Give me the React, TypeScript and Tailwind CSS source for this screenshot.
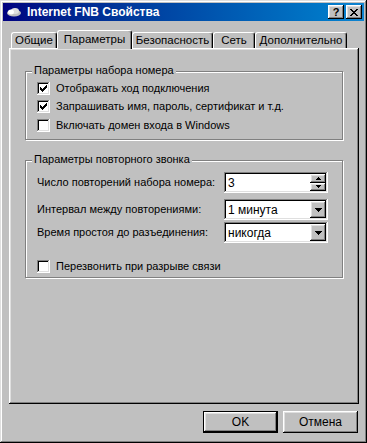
import React from "react";

const raised =
  "bg-[#c0c0c0] shadow-[inset_-1px_-1px_#000,inset_1px_1px_#fff,inset_-2px_-2px_#808080,inset_2px_2px_#dfdfdf]";
const sunken =
  "bg-white shadow-[inset_-1px_-1px_#fff,inset_1px_1px_#808080,inset_-2px_-2px_#dfdfdf,inset_2px_2px_#000]";

function Checkbox({ checked, label }: { checked?: boolean; label: string }) {
  return (
    <div className="flex items-center h-[13px]">
      <div className={`w-[13px] h-[13px] flex items-center justify-center ${sunken}`}>
        {checked && (
          <svg width="7" height="7" viewBox="0 0 7 7">
            <path d="M0 2h1v1h1v1h1V3h1V2h1V1h1V0h1v3H6v1H5v1H4v1H3v1H2V6H1V5H0z" fill="#000" />
          </svg>
        )}
      </div>
      <span className="ml-[6px] leading-none whitespace-nowrap">{label}</span>
    </div>
  );
}

function DownArrow() {
  return (
    <svg width="7" height="4" viewBox="0 0 7 4">
      <path d="M0 0h7v1H6v1H5v1H4v1H3V3H2V2H1V1H0z" fill="#000" />
    </svg>
  );
}

function Combo({ value }: { value: string }) {
  return (
    <div className={`h-[21px] w-[104px] flex items-center p-[2px] ${sunken}`}>
      <span className="flex-1 pl-[2px] leading-none text-[12px]">{value}</span>
      <div className={`w-[16px] h-[17px] flex items-center justify-center ${raised}`}>
        <DownArrow />
      </div>
    </div>
  );
}

function Spinner({ value }: { value: string }) {
  return (
    <div className={`h-[21px] w-[104px] flex items-center p-[2px] ${sunken}`}>
      <span className="flex-1 pl-[2px] leading-none text-[12px]">{value}</span>
      <div className="flex flex-col w-[16px] h-[17px]">
        <div className={`flex-1 flex items-center justify-center ${raised}`}>
          <svg width="5" height="3" viewBox="0 0 5 3">
            <path d="M2 0h1v1h1v1h1v1H0V2h1V1h1z" fill="#000" />
          </svg>
        </div>
        <div className={`flex-1 flex items-center justify-center ${raised}`}>
          <svg width="5" height="3" viewBox="0 0 5 3">
            <path d="M0 0h5v1H4v1H3v1H2V2H1V1H0z" fill="#000" />
          </svg>
        </div>
      </div>
    </div>
  );
}

function GroupBox({
  title,
  className,
  children,
}: {
  title: string;
  className: string;
  children: React.ReactNode;
}) {
  return (
    <div
      className={`relative w-[318px] border border-[#808080] shadow-[1px_1px_0_#fff,inset_1px_1px_0_#fff] ${className}`}
    >
      <span className="absolute -top-[7px] left-[6px] px-[2px] bg-[#c0c0c0] leading-none whitespace-nowrap">
        {title}
      </span>
      {children}
    </div>
  );
}

const tabs = [
  { label: "Общие", w: "w-[46px]" },
  { label: "Параметры", w: "w-[75px]", active: true },
  { label: "Безопасность", w: "w-[81px]" },
  { label: "Сеть", w: "w-[42px]" },
  { label: "Дополнительно", w: "w-[92px]" },
];

export default function App() {
  return (
    <div className="w-[367px] h-[443px] p-[3px] flex flex-col bg-[#c0c0c0] text-[11px] text-black font-['Liberation_Sans',Arial,sans-serif] shadow-[inset_-1px_-1px_#000,inset_1px_1px_#dfdfdf,inset_-2px_-2px_#808080,inset_2px_2px_#fff]">
      {/* Title bar */}
      <div className="h-[18px] flex items-center bg-gradient-to-r from-[#000080] to-[#1084d0] pl-[3px] pr-[2px]">
        <svg width="16" height="12" viewBox="0 0 16 12">
          <ellipse cx="8" cy="7" rx="7" ry="3.5" fill="#c0c0c0" />
          <ellipse cx="9" cy="5" rx="4" ry="3" fill="#dfdfdf" />
          <ellipse cx="5" cy="6" rx="3" ry="2.5" fill="#fff" />
        </svg>
        <span className="ml-[5px] flex-1 text-white font-bold text-[12px] leading-none">
          Internet FNB Свойства
        </span>
        <div className={`w-[16px] h-[14px] flex items-center justify-center font-bold text-[11px] leading-none ${raised}`}>
          ?
        </div>
        <div className={`ml-[2px] w-[16px] h-[14px] flex items-center justify-center ${raised}`}>
          <svg width="8" height="7" viewBox="0 0 8 7">
            <path d="M0 0h2v1h1v1h2V1h1V0h2v1H7v1H6v1H5v1h1v1h1v1h1v1H6V6H5V5H3v1H2v1H0V6h1V5h1V4h1V3H2V2H1V1H0z" fill="#000" />
          </svg>
        </div>
      </div>

      {/* Tabs */}
      <div className="ml-[8px] mt-[9px] h-[18px] flex items-end">
        {tabs.map((t) =>
          t.active ? (
            <div
              key={t.label}
              className={`${t.w} relative z-10 h-[19px] -mb-[1px] flex items-start justify-center pt-[3px] bg-[#c0c0c0] border-l border-t border-r border-l-white border-t-white border-r-black rounded-t-[3px] shadow-[inset_-1px_0_0_#808080]`}
            >
              <span className="leading-none text-[11.5px]">{t.label}</span>
            </div>
          ) : (
            <div
              key={t.label}
              className={`${t.w} h-[16px] flex items-center justify-center border-l border-t border-r border-l-white border-t-white border-r-black rounded-t-[3px] shadow-[inset_-1px_0_0_#808080]`}
            >
              <span className="leading-none pt-[1px] text-[11.5px]">{t.label}</span>
            </div>
          )
        )}
      </div>

      {/* Panel */}
      <div className="ml-[6px] w-[350px] h-[356px] pl-[16px] pt-[23px] shadow-[inset_-1px_-1px_#000,inset_1px_1px_#fff,inset_-2px_-2px_#808080,inset_2px_2px_#dfdfdf]">
        <GroupBox title="Параметры набора номера" className="h-[69px] pl-[11px] pt-[10px]">
          <Checkbox checked label="Отображать ход подключения" />
          <div className="mt-[5px]">
            <Checkbox checked label="Запрашивать имя, пароль, сертификат и т.д." />
          </div>
          <div className="mt-[6px]">
            <Checkbox label="Включать домен входа в Windows" />
          </div>
        </GroupBox>

        <GroupBox title="Параметры повторного звонка" className="mt-[20px] h-[118px] pl-[11px] pt-[11px]">
          <div className="grid grid-cols-[187px_104px] items-center">
            <span className="leading-none whitespace-nowrap">Число повторений набора номера:</span>
            <Spinner value="3" />
          </div>
          <div className="mt-[6px] grid grid-cols-[187px_104px] items-center">
            <span className="leading-none whitespace-nowrap">Интервал между повторениями:</span>
            <Combo value="1 минута" />
          </div>
          <div className="mt-[2px] grid grid-cols-[187px_104px] items-center">
            <span className="leading-none whitespace-nowrap">Время простоя до разъединения:</span>
            <Combo value="никогда" />
          </div>
          <div className="mt-[17px]">
            <Checkbox label="Перезвонить при разрыве связи" />
          </div>
        </GroupBox>
      </div>

      {/* Buttons */}
      <div className="ml-[6px] w-[350px] mt-[7px] pr-[1px] flex justify-end gap-[5px]">
        <div className="w-[75px] h-[22px] border border-black">
          <div className={`w-full h-full flex items-center justify-center ${raised}`}>
            <span className="leading-none text-[12px]">OK</span>
          </div>
        </div>
        <div className={`w-[75px] h-[22px] flex items-center justify-center ${raised}`}>
          <span className="leading-none text-[12px]">Отмена</span>
        </div>
      </div>
    </div>
  );
}
